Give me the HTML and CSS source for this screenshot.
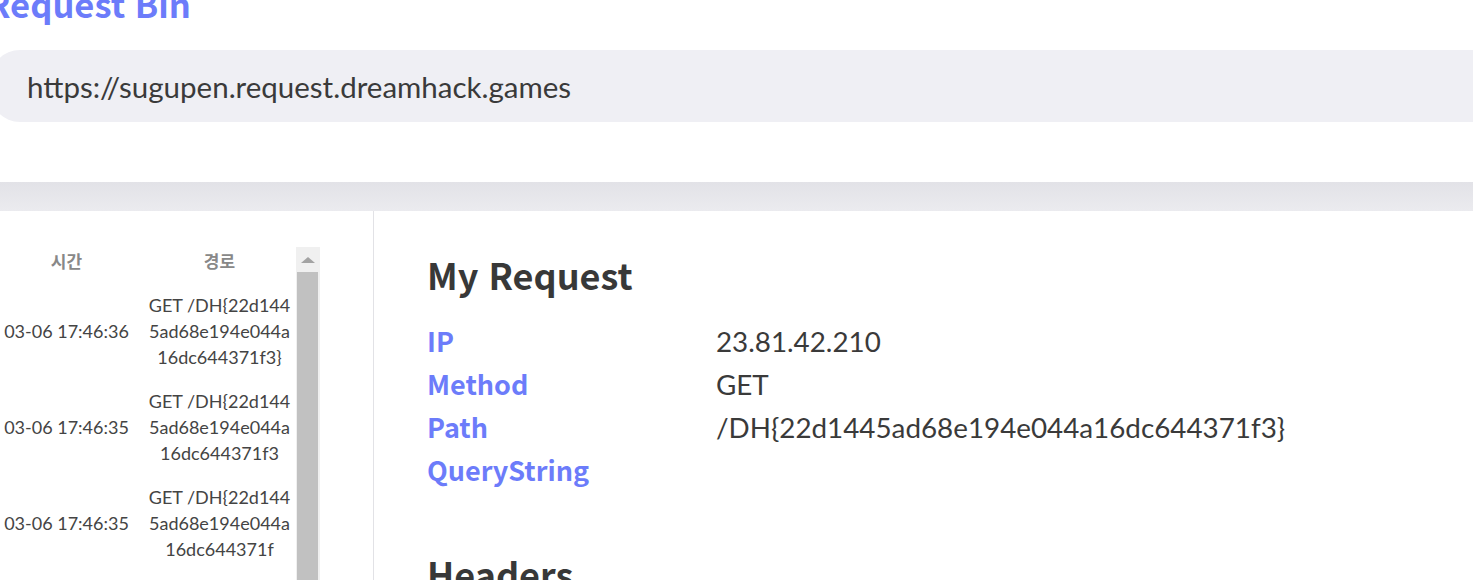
FILE: index.html
```html
<!DOCTYPE html>
<html lang="ko">

<head>
    <meta charset="UTF-8">
    <meta name="viewport" content="width=device-width, initial-scale=1.0">
    <title>Request Bin</title>
    <link rel="stylesheet" href="styles.css">
</head>

<body>
    <div class="page">
        <header class="bin-header">
            <h1 class="bin-title">Request Bin</h1>
            <div class="bin-url">https://sugupen.request.dreamhack.games</div>
        </header>

        <div class="band"></div>

        <main class="bin-main">
            <section class="list-panel">
                <div class="list-scroll">
                    <table class="req-table">
                        <thead>
                            <tr>
                                <th class="col-time">시간</th>
                                <th class="col-path">경로</th>
                            </tr>
                        </thead>
                        <tbody>
                            <tr>
                                <td class="col-time">03-06 17:46:36</td>
                                <td class="col-path">GET /DH{22d1445ad68e194e044a16dc644371f3}</td>
                            </tr>
                            <tr>
                                <td class="col-time">03-06 17:46:35</td>
                                <td class="col-path">GET /DH{22d1445ad68e194e044a16dc644371f3</td>
                            </tr>
                            <tr>
                                <td class="col-time">03-06 17:46:35</td>
                                <td class="col-path">GET /DH{22d1445ad68e194e044a16dc644371f</td>
                            </tr>
                        </tbody>
                    </table>
                    <div class="scrollbar">
                        <div class="scroll-up"></div>
                        <div class="scroll-thumb"></div>
                    </div>
                </div>
            </section>

            <section class="detail-panel">
                <h2 class="detail-title">My Request</h2>
                <dl class="detail-list">
                    <div class="detail-row">
                        <dt>IP</dt>
                        <dd>23.81.42.210</dd>
                    </div>
                    <div class="detail-row">
                        <dt>Method</dt>
                        <dd>GET</dd>
                    </div>
                    <div class="detail-row">
                        <dt>Path</dt>
                        <dd>/DH{22d1445ad68e194e044a16dc644371f3}</dd>
                    </div>
                    <div class="detail-row">
                        <dt>QueryString</dt>
                        <dd></dd>
                    </div>
                </dl>
                <h2 class="detail-title headers-title">Headers</h2>
            </section>
        </main>
    </div>
</body>

</html>
```

FILE: styles.css
```css
body {
    margin: 0;
    overflow: hidden;
    background-color: #fff;
    font-family: 'Lato', 'Noto Sans CJK KR', sans-serif;
    color: #3a3a3a;
}

.page {
    margin-left: -10px;
}

.bin-title {
    margin: -21px 0 0 -3px;
    font-family: 'Noto Sans CJK KR', sans-serif;
    font-size: 34.5px;
    line-height: 48px;
    font-weight: 700;
    color: #6c7cfa;
}

.bin-url {
    margin: 23px -40px 0 0;
    height: 72px;
    padding-left: 37px;
    display: flex;
    align-items: center;
    background-color: #efeff4;
    border-radius: 30px 0 0 30px;
    font-size: 29.5px;
    color: #3a3a3a;
}

.band {
    margin-top: 60px;
    height: 29px;
    background: linear-gradient(#e2e2e7, #ebebef);
}

.bin-main {
    display: flex;
    height: 400px;
}

.list-panel {
    width: 383px;
    border-right: 1px solid #e2e2e6;
    padding-top: 36px;
}

.list-scroll {
    display: flex;
    align-items: flex-start;
}

.req-table {
    border-collapse: collapse;
    width: 306px;
    table-layout: fixed;
}

.req-table th {
    height: 28px;
    padding: 0 0 8px;
    font-family: 'Noto Sans CJK KR', sans-serif;
    font-size: 17px;
    line-height: 28px;
    font-weight: 700;
    color: #888;
    text-align: center;
}

.req-table td {
    padding: 9px 3px;
    font-size: 18px;
    line-height: 26px;
    color: #444;
    text-align: center;
    vertical-align: middle;
}

.col-time {
    width: 150px;
}

.req-table td.col-time {
    padding: 9px 0;
    white-space: nowrap;
}

.req-table .col-path {
    width: 150px;
    word-break: break-all;
}

.scrollbar {
    width: 24px;
    height: 400px;
    background-color: #f0f0f0;
    display: flex;
    flex-direction: column;
    align-items: flex-start;
}

.scroll-up {
    width: 24px;
    height: 25px;
    display: flex;
    justify-content: center;
    align-items: center;
}

.scroll-up::before {
    content: "";
    border-left: 7px solid transparent;
    border-right: 7px solid transparent;
    border-bottom: 6px solid #a3a3a3;
}

.scroll-thumb {
    margin-left: 1px;
    width: 21px;
    flex: 1;
    background-color: #c1c1c1;
}

.detail-panel {
    padding: 39px 0 0 53px;
    flex: 1;
}

.detail-title {
    margin: 0 0 21px;
    font-family: 'Noto Sans CJK KR', sans-serif;
    font-size: 36px;
    line-height: 48px;
    font-weight: 700;
    color: #383838;
}

.detail-list {
    margin: 0;
}

.detail-row {
    height: 43px;
    display: grid;
    grid-template-columns: 288px 1fr;
    align-items: baseline;
}

.detail-row dt {
    font-family: 'Noto Sans CJK KR', sans-serif;
    font-size: 27px;
    line-height: 43px;
    font-weight: 700;
    color: #6c7cfa;
}

.detail-row dd {
    margin: 0 0 0 1px;
    font-size: 27.8px;
    line-height: 43px;
    color: #3a3a3a;
}

.headers-title {
    margin-top: 58px;
}
```
